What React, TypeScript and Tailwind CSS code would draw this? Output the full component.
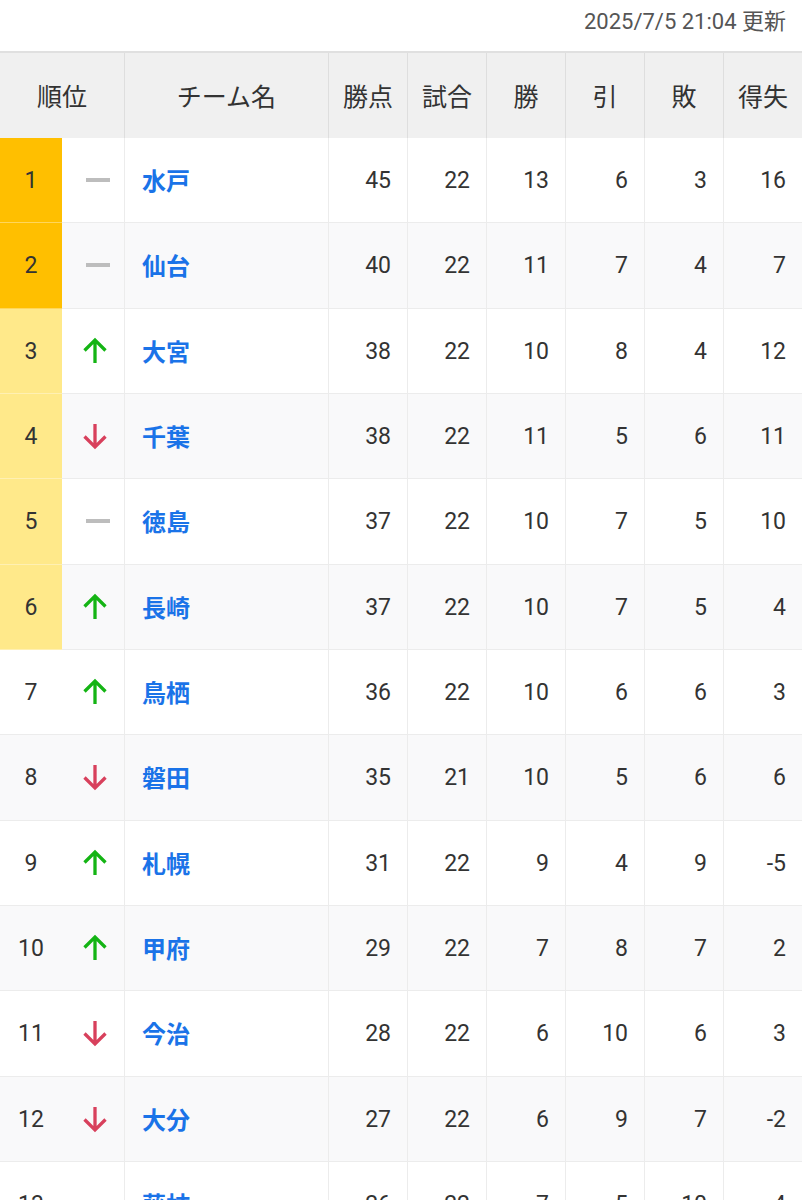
import React from 'react';

type Move = 'up' | 'down' | 'same';

interface Standing {
  rank: number;
  move: Move;
  team: string;
  pts: number;
  played: number;
  win: number;
  draw: number;
  lose: number;
  diff: number;
}

const standings: Standing[] = [
  { rank: 1, move: 'same', team: '水戸', pts: 45, played: 22, win: 13, draw: 6, lose: 3, diff: 16 },
  { rank: 2, move: 'same', team: '仙台', pts: 40, played: 22, win: 11, draw: 7, lose: 4, diff: 7 },
  { rank: 3, move: 'up', team: '大宮', pts: 38, played: 22, win: 10, draw: 8, lose: 4, diff: 12 },
  { rank: 4, move: 'down', team: '千葉', pts: 38, played: 22, win: 11, draw: 5, lose: 6, diff: 11 },
  { rank: 5, move: 'same', team: '徳島', pts: 37, played: 22, win: 10, draw: 7, lose: 5, diff: 10 },
  { rank: 6, move: 'up', team: '長崎', pts: 37, played: 22, win: 10, draw: 7, lose: 5, diff: 4 },
  { rank: 7, move: 'up', team: '鳥栖', pts: 36, played: 22, win: 10, draw: 6, lose: 6, diff: 3 },
  { rank: 8, move: 'down', team: '磐田', pts: 35, played: 21, win: 10, draw: 5, lose: 6, diff: 6 },
  { rank: 9, move: 'up', team: '札幌', pts: 31, played: 22, win: 9, draw: 4, lose: 9, diff: -5 },
  { rank: 10, move: 'up', team: '甲府', pts: 29, played: 22, win: 7, draw: 8, lose: 7, diff: 2 },
  { rank: 11, move: 'down', team: '今治', pts: 28, played: 22, win: 6, draw: 10, lose: 6, diff: 3 },
  { rank: 12, move: 'down', team: '大分', pts: 27, played: 22, win: 6, draw: 9, lose: 7, diff: -2 },
  { rank: 13, move: 'same', team: '藤枝', pts: 26, played: 22, win: 7, draw: 5, lose: 10, diff: 4 },
];

const cols = 'grid grid-cols-[62px_63px_204px_79px_79px_79px_79px_79px_78px]';

const MoveIcon = ({ move }: { move: Move }) => {
  if (move === 'same') {
    return <div className="ml-[9px] w-[24px] h-[4px] bg-[#bdbdbd]" />;
  }
  const up = move === 'up';
  return (
    <svg className="ml-[3px]" width="30" height="30" viewBox="0 0 30 30" fill="none">
      {up ? (
        <path d="M15 27V4.5M4.5 14.5L15 4L25.5 14.5" stroke="#14b414" strokeWidth="3.3" />
      ) : (
        <path d="M15 3V25.5M4.5 15.5L15 26L25.5 15.5" stroke="#d8405c" strokeWidth="3.3" />
      )}
    </svg>
  );
};

const rankBg = (rank: number) => {
  if (rank <= 2) return 'bg-[#ffbf00] border-[#ffd65c]';
  if (rank <= 6) return 'bg-[#ffe98a] border-[#fff0b3]';
  return 'border-[#ececec]';
};

export default function App() {
  return (
    <div className="w-[802px] bg-white text-[#333] font-['Roboto','Noto_Sans_CJK_JP',sans-serif]">
      {/* Updated time */}
      <div className="h-[51px] flex items-start justify-end pr-[16px] pt-[5px] text-[22px] text-[#555]">
        2025/7/5 21:04 更新
      </div>

      <div className="border-t-2 border-[#e0e0e0]">
        {/* Header */}
        <div className={`${cols} h-[85px] bg-[#f0f0f0] text-[25px] text-[#333]`}>
          <div className="col-span-2 flex items-center justify-center pt-[4px] border-r border-[#dedede]">順位</div>
          <div className="flex items-center justify-center pt-[4px] border-r border-[#dedede]">チーム名</div>
          <div className="flex items-center justify-center pt-[4px] border-r border-[#dedede]">勝点</div>
          <div className="flex items-center justify-center pt-[4px] border-r border-[#dedede]">試合</div>
          <div className="flex items-center justify-center pt-[4px] border-r border-[#dedede]">勝</div>
          <div className="flex items-center justify-center pt-[4px] border-r border-[#dedede]">引</div>
          <div className="flex items-center justify-center pt-[4px] border-r border-[#dedede]">敗</div>
          <div className="flex items-center justify-center pt-[4px]">得失</div>
        </div>

        {/* Rows */}
        {standings.map((s, i) => {
          const rowBg = i % 2 === 0 ? 'bg-white' : 'bg-[#f9f9fa]';
          const cell = 'flex items-center justify-end pr-[16px] pt-[2px] border-b border-r border-[#ececec] text-[23px]';
          return (
            <div key={s.rank} className={`${cols} h-[85.33px] ${rowBg}`}>
              <div className={`flex items-center justify-center pt-[2px] border-b text-[23px] ${rankBg(s.rank)}`}>
                {s.rank}
              </div>
              <div className="flex items-center justify-center border-b border-r border-[#ececec]">
                <MoveIcon move={s.move} />
              </div>
              <div className="flex items-center pl-[17px] pt-[4px] border-b border-r border-[#ececec] text-[24px] font-bold text-[#1a73e8]">
                {s.team}
              </div>
              <div className={cell}>{s.pts}</div>
              <div className={cell}>{s.played}</div>
              <div className={cell}>{s.win}</div>
              <div className={cell}>{s.draw}</div>
              <div className={cell}>{s.lose}</div>
              <div className="flex items-center justify-end pr-[16px] pt-[2px] border-b border-[#ececec] text-[23px]">{s.diff}</div>
            </div>
          );
        })}
      </div>
    </div>
  );
}
